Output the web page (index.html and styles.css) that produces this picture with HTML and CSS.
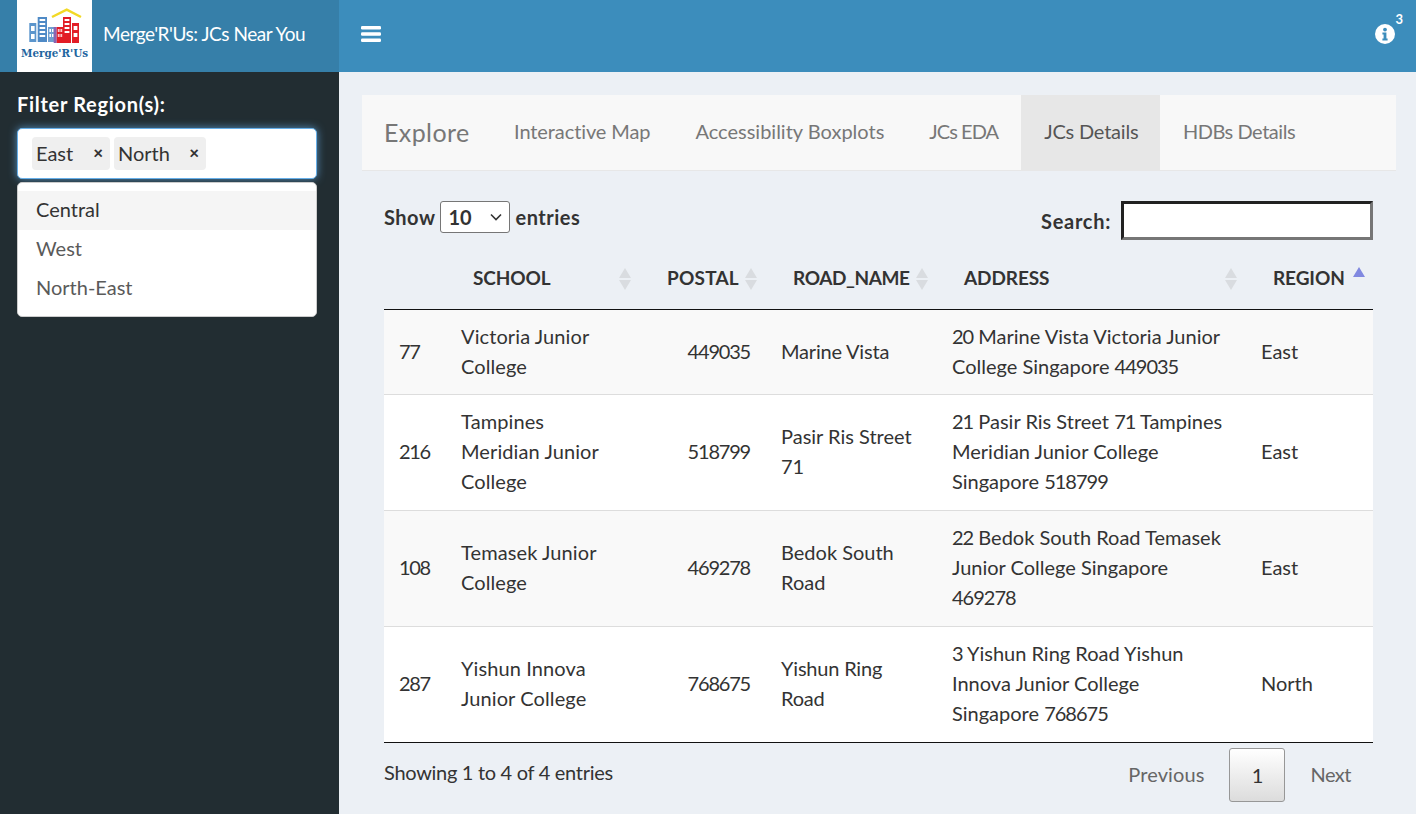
FILE: index.html
```html
<!DOCTYPE html>
<html lang="en">
<head>
<meta charset="utf-8">
<title>Merge'R'Us: JCs Near You</title>
<link rel="stylesheet" href="styles.css">
</head>
<body>
<div class="app">
  <aside class="sidebar">
    <div class="brand">
      <div class="logo">
        <svg class="logo-art" viewBox="0 0 56 36" width="56" height="36" aria-hidden="true">
          <polyline points="25,9 39.7,1.6 54,9" fill="none" stroke="#f2d926" stroke-width="2.4"/>
          <rect x="2.3" y="15" width="7" height="19" fill="#5b95cc"/>
          <rect x="4" y="18" width="3.6" height="5" fill="#fff"/><rect x="4" y="26" width="3.6" height="5" fill="#fff"/>
          <rect x="10.7" y="9" width="9.3" height="25" fill="#4f8ac6"/>
          <rect x="12.6" y="11" width="5.6" height="2" fill="#fff"/><rect x="12.6" y="15" width="5.6" height="2" fill="#fff"/><rect x="12.6" y="19" width="5.6" height="2" fill="#fff"/><rect x="12.6" y="23" width="5.6" height="2" fill="#fff"/><rect x="12.6" y="27" width="5.6" height="2" fill="#fff"/>
          <rect x="21" y="19" width="6" height="15" fill="#6f9fd0"/>
          <rect x="22.4" y="21" width="1.6" height="3" fill="#fff"/><rect x="25" y="21" width="1.6" height="3" fill="#fff"/><rect x="22.4" y="26" width="1.6" height="3" fill="#fff"/><rect x="25" y="26" width="1.6" height="3" fill="#fff"/>
          <rect x="26.7" y="19" width="3" height="16" fill="#8a63b0"/>
          <rect x="29.7" y="19" width="6.3" height="16" fill="#e21d26"/>
          <rect x="30.8" y="21" width="1.8" height="3" fill="#f9c6c8"/><rect x="33.4" y="21" width="1.8" height="3" fill="#f9c6c8"/><rect x="30.8" y="26" width="1.8" height="3" fill="#f9c6c8"/><rect x="33.4" y="26" width="1.8" height="3" fill="#f9c6c8"/>
          <rect x="36" y="9" width="8" height="26" fill="#e21d26"/>
          <rect x="37.6" y="11" width="4.8" height="2" fill="#fff"/><rect x="37.6" y="15" width="4.8" height="2" fill="#fff"/><rect x="37.6" y="19" width="4.8" height="2" fill="#fff"/><rect x="37.6" y="23" width="4.8" height="2" fill="#fff"/>
          <rect x="45" y="15" width="7" height="20" fill="#e21d26"/>
          <rect x="46.6" y="18" width="3.8" height="4" fill="#fff"/><rect x="46.6" y="25" width="3.8" height="4" fill="#fff"/>
        </svg>
        <span class="logo-name">Merge'R'Us</span>
      </div>
      <span class="brand-title">Merge'R'Us: JCs Near You</span>
    </div>
    <div class="filter">
      <label class="filter-label">Filter Region(s):</label>
      <div class="select-box">
        <span class="tag">East<i class="tag-x">×</i></span>
        <span class="tag tag-north">North<i class="tag-x">×</i></span>
      </div>
      <ul class="dropdown">
        <li class="opt opt-active">Central</li>
        <li class="opt">West</li>
        <li class="opt">North-East</li>
      </ul>
    </div>
  </aside>
  <div class="right">
    <header class="topbar">
      <svg class="burger" viewBox="0 0 20 16" width="20" height="16" aria-hidden="true">
        <rect y="0" width="20" height="3.4" rx="1.2"/><rect y="6.3" width="20" height="3.4" rx="1.2"/><rect y="12.6" width="20" height="3.4" rx="1.2"/>
      </svg>
      <div class="info">
        <svg viewBox="0 0 20 20" width="20" height="20" aria-hidden="true">
          <circle cx="10" cy="10" r="10" fill="#fff"/>
          <circle cx="10" cy="5.6" r="1.9" fill="#3c8dbc"/>
          <path d="M7.4 8.6h4v6h1.2v2H7.4v-2h1.2v-4H7.4z" fill="#3c8dbc"/>
        </svg>
        <span class="badge">3</span>
      </div>
    </header>
    <main class="content">
      <nav class="tabs">
        <span class="tabs-title">Explore</span>
        <a class="tab">Interactive Map</a>
        <a class="tab tab-wide">Accessibility Boxplots</a>
        <a class="tab tab-caps">JCs EDA</a>
        <a class="tab tab-active">JCs Details</a>
        <a class="tab tab-hdb">HDBs Details</a>
      </nav>
      <section class="dt">
        <div class="dt-top">
          <label class="dt-length">Show
            <span class="len-select">10
              <svg viewBox="0 0 12 8" width="12" height="8" aria-hidden="true"><path d="M1 1.5l5 5 5-5" fill="none" stroke="#333" stroke-width="1.6"/></svg>
            </span>
            entries</label>
          <label class="dt-search">Search:<input class="search-input" type="text"></label>
        </div>
        <table class="table">
          <colgroup>
            <col class="c0"><col class="c1"><col class="c2"><col class="c3"><col class="c4"><col class="c5">
          </colgroup>
          <thead>
            <tr>
              <th></th>
              <th class="sort">SCHOOL</th>
              <th class="sort th-postal">POSTAL</th>
              <th class="sort th-road">ROAD_NAME</th>
              <th class="sort">ADDRESS</th>
              <th class="sort sort-asc">REGION</th>
            </tr>
          </thead>
          <tbody>
            <tr class="odd"><td class="num-tight">77</td><td class="school">Victoria Junior<br>College</td><td class="num">449035</td><td class="road-tight">Marine Vista</td><td><span class="zip">20</span> Marine Vista Victoria Junior<br>College Singapore <span class="zip">449035</span></td><td>East</td></tr>
            <tr><td class="num-tight">216</td><td class="school">Tampines<br>Meridian Junior<br>College</td><td class="num">518799</td><td>Pasir Ris Street<br>71</td><td><span class="zip">21</span> Pasir Ris Street <span class="zip">71</span> Tampines<br>Meridian Junior College<br>Singapore <span class="zip">518799</span></td><td>East</td></tr>
            <tr class="odd"><td class="num-tight">108</td><td class="school">Temasek Junior<br>College</td><td class="num">469278</td><td>Bedok South<br>Road</td><td><span class="zip">22</span> Bedok South Road Temasek<br>Junior College Singapore<br><span class="zip">469278</span></td><td>East</td></tr>
            <tr><td class="num-tight">287</td><td class="school">Yishun Innova<br>Junior College</td><td class="num">768675</td><td class="road-tight">Yishun Ring<br>Road</td><td><span class="zip">3</span> Yishun Ring Road Yishun<br>Innova Junior College<br>Singapore <span class="zip">768675</span></td><td>North</td></tr>
          </tbody>
        </table>
        <div class="dt-bottom">
          <span class="dt-info">Showing 1 to 4 of 4 entries</span>
          <div class="pager">
            <a class="page page-prev">Previous</a>
            <a class="page page-current">1</a>
            <a class="page page-next">Next</a>
          </div>
        </div>
      </section>
    </main>
  </div>
</div>
</body>
</html>
```

FILE: styles.css
```css
* { box-sizing: border-box; }
html, body { margin: 0; height: 100%; overflow: hidden; }
body { font-family: "Lato", "Liberation Sans", sans-serif; font-size: 20px; color: #333; background: #ecf0f5; }
.app { display: flex; height: 814px; }
.sidebar { width: 339px; flex: none; background: #222d32; }
.brand { height: 72px; background: #367fa9; padding-left: 17px; display: flex; align-items: center; }
.logo { width: 75px; height: 72px; background: #fff; display: flex; flex-direction: column; align-items: center; padding-top: 8px; }
.logo-art { display: block; }
.logo-name { font-family: "DejaVu Serif Condensed", "DejaVu Serif", serif; font-stretch: condensed; font-weight: 700; font-size: 11.5px; line-height: 16px; margin-top: 1px; color: #1f66a0; white-space: nowrap; }
.brand-title { margin-left: 11px; padding-bottom: 5px; color: #fff; font-size: 19px; letter-spacing: -0.46px; }
.filter { padding: 20px 22px 0 17px; }
.filter-label { display: block; color: #fff; font-weight: 700; font-size: 20px; letter-spacing: 0.7px; line-height: 24px; margin-bottom: 12px; }
.select-box { height: 51px; background: #fff; border: 1px solid #66afe9; border-radius: 5px; box-shadow: 0 0 8px rgba(102,175,233,.75); padding: 8px 14px; display: flex; gap: 4px; }
.tag { height: 33px; background: #efefef; border-radius: 4px; padding: 0 5px 2px 4px; display: flex; align-items: center; color: #333; width: 78px; justify-content: space-between; }
.tag-north { width: 92px; }
.tag-x { font-style: normal; font-weight: 900; font-size: 17px; margin-right: 2px; }
.dropdown { list-style: none; margin: 3px 0 0; padding: 8px 0 9px; background: #fff; border: 1px solid #ccc; border-radius: 5px; height: 135px; }
.opt { height: 39px; line-height: 37px; padding-left: 18px; color: #5a5a5a; }
.opt-active { background: #f5f5f5; color: #333; }
.right { flex: 1; min-width: 0; display: flex; flex-direction: column; }
.topbar { height: 72px; flex: none; background: #3c8dbc; display: flex; align-items: center; justify-content: space-between; padding: 0 21px 4px 22px; }
.burger { fill: #fff; display: block; }
.info { position: relative; display: flex; }
.badge { position: absolute; right: -8px; top: -13px; color: #fff; font-size: 13px; font-weight: 700; }
.content { flex: 1; padding: 23px 20px 0 23px; }
.tabs { height: 76px; background: #f8f8f8; border-bottom: 1px solid #e7e7e7; display: flex; padding-left: 22px; }
.tabs-title { font-size: 25px; letter-spacing: 0.4px; line-height: 75px; color: #777; margin-right: 22px; }
.tab { line-height: 73px; padding: 0 22.5px; color: #777; letter-spacing: -0.1px; }
.tab-wide { letter-spacing: 0; }
.tab-caps { letter-spacing: -0.95px; }
.tab-active { background: #e7e7e7; color: #555; letter-spacing: -0.2px; padding: 0 22px 0 23.5px; }
.tab-hdb { letter-spacing: -0.45px; }
.dt { padding: 0 23px 0 22px; }
.dt-top { display: flex; justify-content: space-between; padding-top: 30px; height: 78px; }
.dt-length { font-weight: 700; letter-spacing: 0.5px; display: flex; align-items: flex-start; gap: 5px; line-height: 32px; }
.len-select { width: 70px; height: 32px; background: #fff; border: 1px solid #767676; border-radius: 3px; display: flex; align-items: center; justify-content: space-between; padding: 0 7px; letter-spacing: 0; }
.dt-search { font-weight: 700; letter-spacing: 0.7px; display: flex; align-items: center; gap: 10px; height: 39px; }
.search-input { width: 252px; height: 39px; border-width: 3px; border-style: inset; background: #fff; }
.table { width: 989px; table-layout: fixed; border-collapse: separate; border-spacing: 0; border-bottom: 1px solid #111; }
.c0 { width: 62px; } .c1 { width: 194px; } .c2 { width: 126px; } .c3 { width: 171px; } .c4 { width: 309px; } .c5 { width: 127px; }
th { height: 61px; border-bottom: 1px solid #111; text-align: left; padding: 0 0 3px 27px; position: relative; font-weight: 700; font-size: 19px; letter-spacing: -0.1px; vertical-align: middle; }
.th-postal { letter-spacing: 0.2px; }
.th-road { letter-spacing: -0.4px; }
th.sort::before, th.sort::after { content: ""; position: absolute; right: 9px; width: 0; height: 0; border-left: 6px solid transparent; border-right: 6px solid transparent; }
th.sort::before { top: 19px; border-bottom: 10px solid #d9dce0; }
th.sort::after { top: 31px; border-top: 10px solid #d9dce0; }
th.sort-asc::before { top: 18px; right: 8px; border-bottom-color: #8088e0; }
th.sort-asc::after { display: none; }
td { padding: 11px 15px 14px; line-height: 30px; vertical-align: middle; border-top: 1px solid #ddd; background: #fff; }
tr.odd td { background: #f9f9f9; }
tbody tr:first-child td { border-top: 0; padding: 11px 15px 13px; }
tbody tr:first-child td.num { padding-right: 16px; }
.num { text-align: right; letter-spacing: -1.2px; padding-right: 16px; }
.num-tight { letter-spacing: -1.3px; }
.school { letter-spacing: 0.1px; }
.road-tight { letter-spacing: -0.2px; }
.zip { letter-spacing: -1px; }
.dt-bottom { display: flex; justify-content: space-between; align-items: flex-start; padding-top: 5px; }
.dt-info { line-height: 49px; letter-spacing: -0.3px; }
.pager { display: flex; }
.page { height: 54px; line-height: 52px; padding: 0 23px; color: #666; }
.page-prev { padding-right: 25px; letter-spacing: 0.1px; }
.page-next { padding: 0 22px 0 25px; letter-spacing: -0.5px; }
.page-current { width: 56px; padding: 0; text-align: center; border: 1px solid #979797; border-radius: 3px; background: linear-gradient(#fff, #dcdcdc); color: #333; }
```
